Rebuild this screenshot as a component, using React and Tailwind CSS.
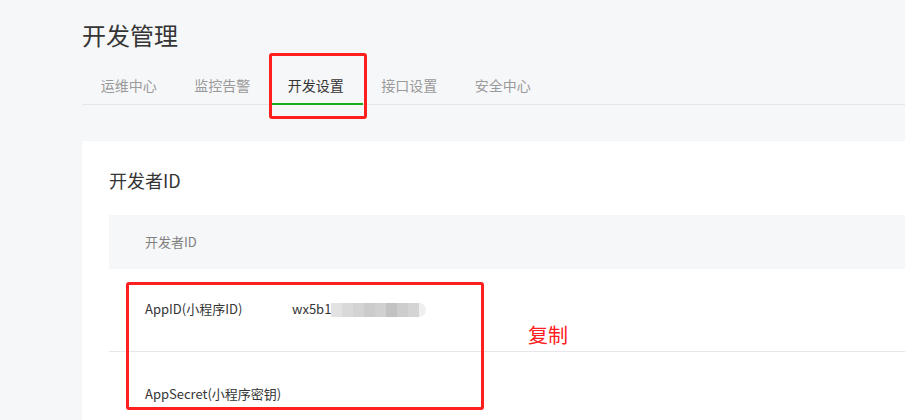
import React from 'react';

const TABS = ['运维中心', '监控告警', '开发设置', '接口设置', '安全中心'];
const MOSAIC = ['#e2e2e2', '#d9d9d9', '#d3d3d3', '#cbcbcb', '#d0d0d0', '#c2c2c2', '#cdcdcd', '#d4d4d4'];

const App = () => {
  return (
    <div
      className="w-[905px] h-[420px] overflow-hidden bg-[#f6f7f9] text-[#353535]"
      style={{ fontFamily: '"Noto Sans CJK SC", "Noto Sans", sans-serif' }}
    >
      <div className="pl-[82px] pt-[19px]">
        <h1 className="text-[24px] leading-[32px] font-normal text-[#353535]">开发管理</h1>

        {/* Tabs */}
        <div className="flex border-b border-[#e5e6e8] h-[54px]">
          {TABS.map((t, i) => {
            const active = i === 2;
            return (
              <div key={t} className="relative w-[93.5px] shrink-0 flex justify-center pt-[24px]">
                <span className={`text-[14px] leading-[20px] ${active ? 'text-[#353535]' : 'text-[#9a9a9a]'}`}>{t}</span>
                {active && (
                  <>
                    <div className="absolute left-[3px] right-0 bottom-[-1px] h-[2px] bg-[#1aad19]" />
                    <div className="absolute left-0 right-[-4px] top-[2px] bottom-[-15px] border-[3px] border-[#ff1f1f] rounded-[3px]" />
                  </>
                )}
              </div>
            );
          })}
        </div>

        {/* Card */}
        <div className="mt-[36px] bg-white rounded-tl-[3px] shadow-[0_0_2px_rgba(0,0,0,0.06)] pl-[27px] pt-[26px] h-[300px]">
          <h2 className="text-[18px] leading-[26px] font-normal text-[#353535]">开发者ID</h2>

          <div className="mt-[22px]">
            <div className="h-[54px] bg-[#f6f7f9] flex items-center pl-[36px] text-[13px] text-[#7f7f7f]">开发者ID</div>

            <div className="relative">
              <div className="h-[83px] border-b border-[#e7e7eb] pl-[36px] pt-[30px] flex items-start text-[13px] text-[#353535]">
                <span className="w-[147px]">AppID(小程序ID)</span>
                <span>wx5b1</span>
                <span className="flex mt-[4px] h-[14px]">
                  {MOSAIC.map((c, i) => (
                    <span key={i} className="w-[11px] h-[14px]" style={{ background: c }} />
                  ))}
                  <span className="w-[7px] h-[14px] bg-[#efefef] rounded-r-full" />
                </span>
              </div>
              <div className="pl-[36px] pt-[32px] text-[13px] text-[#353535]">AppSecret(小程序密钥)</div>

              {/* highlight */}
              <div className="absolute left-[17px] top-[13px] w-[358px] h-[128px] border-[3px] border-[#ff1f1f] rounded-[3px]" />
              <div className="absolute left-[419px] top-[54px] text-[20px] leading-[24px] text-[#ff2020]">复制</div>
            </div>
          </div>
        </div>
      </div>
    </div>
  );
};

export default App;
